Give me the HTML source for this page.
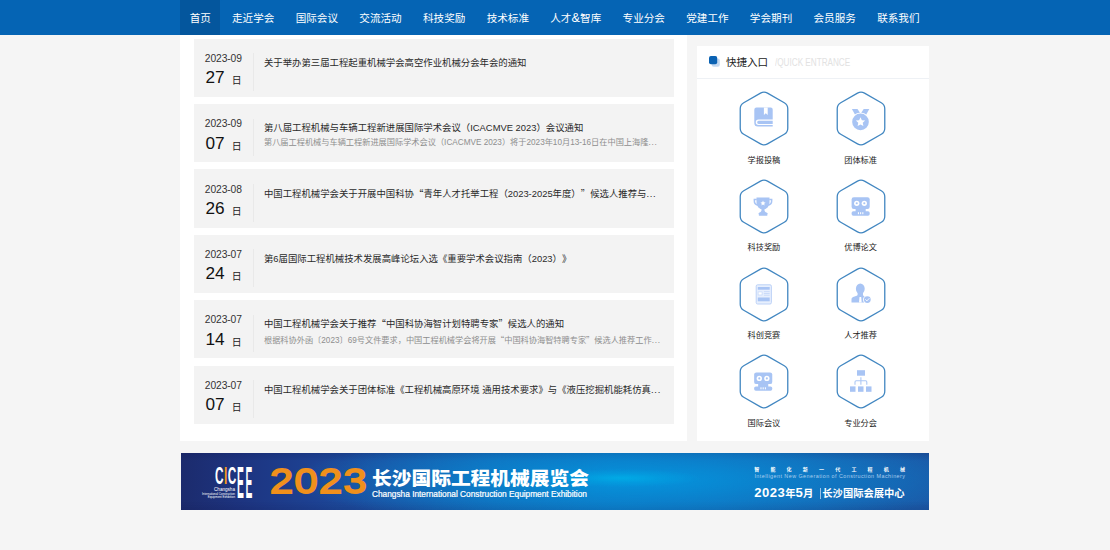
<!DOCTYPE html>
<html lang="zh-CN">
<head>
<meta charset="utf-8">
<title>中国工程机械学会</title>
<style>
*{margin:0;padding:0;box-sizing:border-box;}
html,body{width:1110px;height:550px;overflow:hidden;background:#f5f5f5;}
body{text-spacing-trim:space-all;font-kerning:none;position:relative;font-family:"Liberation Sans","Noto Sans CJK SC",sans-serif;color:#222;}
a{color:inherit;text-decoration:none;}
/* NAV */
#nav{position:absolute;left:0;top:0;width:1110px;height:34.6px;background:#0564b4;}
#nav ul{list-style:none;position:absolute;left:180.3px;top:0;height:34.6px;display:flex;}
#nav li{height:34.6px;line-height:36.9px;font-size:10.6px;color:#fff;padding:0 10.65px;white-space:nowrap;}
#nav li i{font-style:normal;font-size:12.6px;letter-spacing:.2px;}
#nav li.on{background:#04569d;padding:0 9.35px;margin-right:1.2px;box-shadow:1.2px 0 0 #0564b4;}
.el{letter-spacing:.75px;}
.fw{font-family:"Noto Sans CJK SC",sans-serif;}
/* LIST PANEL */
#main{position:absolute;left:180.3px;top:34.6px;width:506.8px;height:406.6px;background:#fff;}
.it{position:absolute;left:13.3px;width:480.2px;height:58.3px;background:#f3f3f3;}
.it .ym{position:absolute;left:11.2px;top:14.2px;font-size:10.3px;line-height:12px;color:#333;letter-spacing:-.1px;}
.it .d{position:absolute;left:11.8px;top:28.7px;font-size:17.2px;line-height:20px;color:#111;}
.it .r{position:absolute;left:38.1px;top:36.6px;font-size:9.9px;line-height:12px;color:#222;}
.it .ln{position:absolute;left:59.4px;top:14.6px;width:1px;height:37.6px;background:#e9e9e9;}
.it .t{position:absolute;left:70.4px;top:17.2px;font-size:9.4px;line-height:13px;color:#2a2a2a;white-space:nowrap;}
.it .s{position:absolute;left:70.4px;top:33.5px;font-size:8.2px;line-height:11px;color:#8e8e8e;white-space:nowrap;}
/* SIDEBAR */
#side{position:absolute;left:696.8px;top:45.8px;width:232.2px;height:395.4px;background:#fff;}
#side .hd{position:absolute;left:0;top:0;width:100%;height:33.1px;border-bottom:1px solid #eef1f5;}
#side .hd .ic{position:absolute;left:12.6px;top:10.6px;width:11px;height:11px;}
#side .hd h3{position:absolute;left:29.1px;top:9.3px;font-size:10.55px;line-height:14px;font-weight:400;color:#222;}
#side .hd em{position:absolute;left:78px;top:11.1px;font-size:10.2px;line-height:12px;font-style:normal;color:#e2e2e2;white-space:nowrap;transform-origin:0 0;transform:scaleX(.8);}
.q{position:absolute;width:80px;text-align:center;}
.q svg{display:block;position:absolute;left:14px;top:0;width:52px;height:57px;}
.q span{position:absolute;left:-.4px;width:80px;top:64.7px;font-size:8.2px;line-height:11px;color:#222;white-space:nowrap;}
/* BANNER */
#ban{position:absolute;left:180.6px;top:452.8px;width:748.4px;height:57px;overflow:hidden;
background:
radial-gradient(ellipse 80px 9px at 440px 25px, rgba(0,176,232,.8) 0%, rgba(0,168,228,.4) 50%, rgba(0,150,220,0) 100%),
radial-gradient(ellipse 350px 46px at 455px 27px, rgba(3,152,224,.9) 0%, rgba(5,142,216,.55) 45%, rgba(10,130,205,0) 100%),
linear-gradient(180deg,rgba(10,10,60,.16) 0%,rgba(10,10,60,0) 14%,rgba(10,10,60,0) 84%,rgba(10,10,60,.12) 100%),
linear-gradient(90deg,#1c2b6d 0%,#1d3480 8%,#1d4293 18%,#1b52a3 27%,#1468b6 42%,#1074c0 58%,#146ebb 72%,#1963b0 86%,#1b59a7 100%);}
#ban div{position:absolute;white-space:nowrap;color:#fff;}
</style>
</head>
<body>
<div id="nav">
<ul>
<li class="on">首页</li><li>走近学会</li><li>国际会议</li><li>交流活动</li><li>科技奖励</li><li>技术标准</li><li>人才<i>&amp;</i>智库</li><li>专业分会</li><li>党建工作</li><li>学会期刊</li><li>会员服务</li><li>联系我们</li>
</ul>
</div>

<div id="main">
<div class="it" style="top:4px"><div class="ym">2023-09</div><div class="d">27</div><div class="r">日</div><div class="ln"></div><div class="t">关于举办第三届工程起重机械学会高空作业机械分会年会的通知</div></div>
<div class="it" style="top:69.4px"><div class="ym">2023-09</div><div class="d">07</div><div class="r">日</div><div class="ln"></div><div class="t">第八届工程机械与车辆工程新进展国际学术会议（ICACMVE 2023）会议通知</div><div class="s">第八届工程机械与车辆工程新进展国际学术会议（ICACMVE 2023）将于2023年10月13-16日在中国上海隆<span class="el">...</span></div></div>
<div class="it" style="top:134.8px"><div class="ym">2023-08</div><div class="d">26</div><div class="r">日</div><div class="ln"></div><div class="t">中国工程机械学会关于开展中国科协<span class="fw">“</span>青年人才托举工程（2023-2025年度）<span class="fw">”</span>候选人推荐与<span class="el">...</span></div></div>
<div class="it" style="top:200.2px"><div class="ym">2023-07</div><div class="d">24</div><div class="r">日</div><div class="ln"></div><div class="t">第6届国际工程机械技术发展高峰论坛入选《重要学术会议指南（2023）》</div></div>
<div class="it" style="top:265.6px"><div class="ym">2023-07</div><div class="d">14</div><div class="r">日</div><div class="ln"></div><div class="t">中国工程机械学会关于推荐<span class="fw">“</span>中国科协海智计划特聘专家<span class="fw">”</span>候选人的通知</div><div class="s">根据科协外函〔2023〕69号文件要求，中国工程机械学会将开展<span class="fw">“</span>中国科协海智特聘专家<span class="fw">”</span>候选人推荐工作<span class="el">...</span></div></div>
<div class="it" style="top:331px"><div class="ym">2023-07</div><div class="d">07</div><div class="r">日</div><div class="ln"></div><div class="t">中国工程机械学会关于团体标准《工程机械高原环境 通用技术要求》与《液压挖掘机能耗仿真<span class="el">...</span></div></div>
</div>

<div id="side">
<div class="hd">
<svg class="ic" viewBox="0 0 11 11"><rect x="2.7" y="2.6" width="8.1" height="8.1" rx="1.9" fill="#c3d8f0"/><rect x="0" y="0" width="8.2" height="8.2" rx="1.9" fill="#0a62b3"/></svg>
<h3>快捷入口</h3><em>/QUICK ENTRANCE</em>
</div>
<div class="q" style="left:27.5px;top:44.1px"><svg viewBox="0 0 52 57"><path d="M22.50 3.07A7.00 7.00 0 0 1 29.50 3.07L46.27 12.75A7.00 7.00 0 0 1 49.77 18.82L49.77 38.18A7.00 7.00 0 0 1 46.27 44.25L29.50 53.93A7.00 7.00 0 0 1 22.50 53.93L5.73 44.25A7.00 7.00 0 0 1 2.23 38.18L2.23 18.82A7.00 7.00 0 0 1 5.73 12.75Z" fill="#fff" stroke="#4287c1" stroke-width="1.3"/>
<g fill="#a8c4f4">
<path d="M16.3 19.7a2.2 2.2 0 0 1 2.2-2.2H32.7a2 2 0 0 1 2 2V36.6H19.9a3.6 3.6 0 0 1-3.6-3.6Z"/>
<path d="M20.5 29.6H35v5.5H20.5a2.75 2.75 0 0 1 0-5.5Z" fill="#fff"/>
<path d="M20.7 30.8H34.7v3.1H20.7a1.55 1.55 0 0 1 0-3.1Z"/>
<path d="M25.9 17.4h3.8v7.7l-1.9-1.9-1.9 1.9Z" fill="#fff"/>
</g></svg><span>学报投稿</span></div>

<div class="q" style="left:124.2px;top:44.1px"><svg viewBox="0 0 52 57"><path d="M22.50 3.07A7.00 7.00 0 0 1 29.50 3.07L46.27 12.75A7.00 7.00 0 0 1 49.77 18.82L49.77 38.18A7.00 7.00 0 0 1 46.27 44.25L29.50 53.93A7.00 7.00 0 0 1 22.50 53.93L5.73 44.25A7.00 7.00 0 0 1 2.23 38.18L2.23 18.82A7.00 7.00 0 0 1 5.73 12.75Z" fill="#fff" stroke="#4287c1" stroke-width="1.3"/>
<g fill="#a8c4f4">
<path d="M16.9 19h5.6l3 4.6-4.9 2.2Z"/><path d="M34.3 19h-5.6l-3 4.6 4.9 2.2Z"/>
<circle cx="25.5" cy="31.9" r="9.5" fill="#fff"/>
<circle cx="25.5" cy="31.9" r="8.3"/>
<polygon fill="#fff" points="25.50,27.20 26.88,30.20 30.16,30.59 27.73,32.83 28.38,36.06 25.50,34.45 22.62,36.06 23.27,32.83 20.84,30.59 24.12,30.20"/>
</g></svg><span>团体标准</span></div>

<div class="q" style="left:27.5px;top:131.9px"><svg viewBox="0 0 52 57"><path d="M22.50 3.07A7.00 7.00 0 0 1 29.50 3.07L46.27 12.75A7.00 7.00 0 0 1 49.77 18.82L49.77 38.18A7.00 7.00 0 0 1 46.27 44.25L29.50 53.93A7.00 7.00 0 0 1 22.50 53.93L5.73 44.25A7.00 7.00 0 0 1 2.23 38.18L2.23 18.82A7.00 7.00 0 0 1 5.73 12.75Z" fill="#fff" stroke="#4287c1" stroke-width="1.3"/>
<g fill="#a8c4f4">
<path d="M18.5 19.4h13v5.6a6.5 6.5 0 0 1-13 0Z"/>
<path d="M18.8 20.8h-3.2v2.3a4.8 4.8 0 0 0 4.2 4.8l-.4-1.5a3.3 3.3 0 0 1-2.3-3.2v-.9h1.7Z"/>
<path d="M31.2 20.8h3.2v2.3a4.8 4.8 0 0 1-4.2 4.8l.4-1.5a3.3 3.3 0 0 0 2.3-3.2v-.9h-1.7Z"/>
<path d="M23.5 30.5h3v1.8c0 1.2 1 2.1 2.6 2.7H20.9c1.600-.6 2.600-1.500 2.600-2.700Z"/>
<rect x="20.800" y="34.800" width="8.600" height="2.900" rx=".4"/>
<polygon transform="translate(.2,.3)" fill="#fff" points="24.80,22.30 25.53,23.99 27.37,24.17 25.99,25.39 26.39,27.18 24.80,26.25 23.21,27.18 23.61,25.39 22.23,24.17 24.07,23.99"/>
</g></svg><span>科技奖励</span></div>

<div class="q" style="left:124.2px;top:131.9px"><svg viewBox="0 0 52 57"><path d="M22.50 3.07A7.00 7.00 0 0 1 29.50 3.07L46.27 12.75A7.00 7.00 0 0 1 49.77 18.82L49.77 38.18A7.00 7.00 0 0 1 46.27 44.25L29.50 53.93A7.00 7.00 0 0 1 22.50 53.93L5.73 44.25A7.00 7.00 0 0 1 2.23 38.18L2.23 18.82A7.00 7.00 0 0 1 5.73 12.75Z" fill="#fff" stroke="#4287c1" stroke-width="1.3"/><g fill="#a8c4f4">
<rect x="16.6" y="19.3" width="18.1" height="11.7" rx="2.2"/>
<rect x="20.6" y="30.500" width="10.100" height="3.500"/>
<rect x="16.6" y="33.3" width="18.1" height="4.400" rx="1.700"/>
<circle cx="21.75" cy="25.3" r="2.650" fill="#fff"/><circle cx="29.3" cy="25.3" r="2.650" fill="#fff"/>
<circle cx="21.75" cy="25.3" r="1.050"/><circle cx="29.3" cy="25.3" r="1.050"/>
<rect x="22.9" y="34.200" width="1.050" height="2" fill="#fff"/><rect x="25.100" y="34.200" width="1.050" height="2" fill="#fff"/><rect x="27.3" y="34.200" width="1.050" height="2" fill="#fff"/>
</g></svg><span>优博论文</span></div>

<div class="q" style="left:27.5px;top:220px"><svg viewBox="0 0 52 57"><path d="M22.50 3.07A7.00 7.00 0 0 1 29.50 3.07L46.27 12.75A7.00 7.00 0 0 1 49.77 18.82L49.77 38.18A7.00 7.00 0 0 1 46.27 44.25L29.50 53.93A7.00 7.00 0 0 1 22.50 53.93L5.73 44.25A7.00 7.00 0 0 1 2.23 38.18L2.23 18.82A7.00 7.00 0 0 1 5.73 12.75Z" fill="#fff" stroke="#4287c1" stroke-width="1.3"/>
<rect x="18.2" y="18.8" width="15.2" height="19.2" rx="1.4" fill="#e7effd" stroke="#bdd2f7" stroke-width="1"/>
<rect x="19.8" y="21" width="11.9" height="2.7" fill="#a8c4f4"/>
<rect x="19.8" y="31.5" width="11.9" height="3.8" fill="#a8c4f4"/>
<rect x="20.1" y="25.9" width="4" height="3.1" fill="#fff" stroke="#c3d6f8" stroke-width=".7"/>
<rect x="25.9" y="25.3" width="5.8" height=".8" fill="#c3d6f8"/><rect x="25.9" y="27.1" width="5.8" height=".8" fill="#c3d6f8"/><rect x="25.9" y="28.8" width="5.8" height=".8" fill="#c3d6f8"/>
</svg><span>科创竞赛</span></div>

<div class="q" style="left:124.2px;top:220px"><svg viewBox="0 0 52 57"><path d="M22.50 3.07A7.00 7.00 0 0 1 29.50 3.07L46.27 12.75A7.00 7.00 0 0 1 49.77 18.82L49.77 38.18A7.00 7.00 0 0 1 46.27 44.25L29.50 53.93A7.00 7.00 0 0 1 22.50 53.93L5.73 44.25A7.00 7.00 0 0 1 2.23 38.18L2.23 18.82A7.00 7.00 0 0 1 5.73 12.75Z" fill="#fff" stroke="#4287c1" stroke-width="1.3"/>
<g fill="#a8c4f4">
<ellipse cx="25.3" cy="22.8" rx="4.4" ry="5.3"/>
<path d="M22.6 26.5h5.4v2.2c0 .8.5 1.2 1.6 1.6l2.2.8c1 .4 1.6 1.2 1.6 2.4v2.9H16.5v-2.9c0-1.2.6-2 1.6-2.4l2.9-1c1.1-.4 1.6-.8 1.6-1.6Z"/>
<path d="M24.5 31h1.7l.5 5.4h-2.7Z" fill="#fff"/>
<circle cx="32.3" cy="33.6" r="4.3" fill="#fff"/>
<circle cx="32.3" cy="33.6" r="3.4"/>
<path d="M30.6 33.6l1.3 1.3 2.2-2.4" fill="none" stroke="#fff" stroke-width=".9" stroke-linecap="round" stroke-linejoin="round"/>
</g></svg><span>人才推荐</span></div>

<div class="q" style="left:27.5px;top:307.4px"><svg viewBox="0 0 52 57"><path d="M22.50 3.07A7.00 7.00 0 0 1 29.50 3.07L46.27 12.75A7.00 7.00 0 0 1 49.77 18.82L49.77 38.18A7.00 7.00 0 0 1 46.27 44.25L29.50 53.93A7.00 7.00 0 0 1 22.50 53.93L5.73 44.25A7.00 7.00 0 0 1 2.23 38.18L2.23 18.82A7.00 7.00 0 0 1 5.73 12.75Z" fill="#fff" stroke="#4287c1" stroke-width="1.3"/><g fill="#a8c4f4" transform="translate(-.45,.1)">
<rect x="16.6" y="19.3" width="18.1" height="11.7" rx="2.2"/>
<rect x="20.6" y="30.500" width="10.100" height="3.500"/>
<rect x="16.6" y="33.3" width="18.1" height="4.400" rx="1.700"/>
<circle cx="21.75" cy="25.3" r="2.650" fill="#fff"/><circle cx="29.3" cy="25.3" r="2.650" fill="#fff"/>
<circle cx="21.75" cy="25.3" r="1.050"/><circle cx="29.3" cy="25.3" r="1.050"/>
<rect x="22.9" y="34.200" width="1.050" height="2" fill="#fff"/><rect x="25.100" y="34.200" width="1.050" height="2" fill="#fff"/><rect x="27.3" y="34.200" width="1.050" height="2" fill="#fff"/>
</g></svg><span>国际会议</span></div>

<div class="q" style="left:124.2px;top:307.4px"><svg viewBox="0 0 52 57"><path d="M22.50 3.07A7.00 7.00 0 0 1 29.50 3.07L46.27 12.75A7.00 7.00 0 0 1 49.77 18.82L49.77 38.18A7.00 7.00 0 0 1 46.27 44.25L29.50 53.93A7.00 7.00 0 0 1 22.50 53.93L5.73 44.25A7.00 7.00 0 0 1 2.23 38.18L2.23 18.82A7.00 7.00 0 0 1 5.73 12.75Z" fill="#fff" stroke="#4287c1" stroke-width="1.3"/>
<g fill="#a8c4f4">
<rect x="22" y="17.2" width="8" height="5.500"/>
<rect x="15" y="33.4" width="5.5" height="5.4"/><rect x="23" y="33.4" width="5.5" height="5.4"/><rect x="31" y="33.4" width="5.5" height="5.4"/>
<path d="M25.9 24.2v7.600M20 31.8v-2.800a1.2 1.2 0 0 1 1.2-1.2h9.400a1.2 1.2 0 0 1 1.2 1.2v2.800" fill="none" stroke="#adc8f5" stroke-width="1.100"/>
</g></svg><span>专业分会</span></div>
</div>

<div id="ban">
<div id="b_cic" style="left:34.2px;top:9.2px;font-size:23.6px;line-height:28px;font-weight:700;transform-origin:0 0;transform:scaleX(.5);letter-spacing:1px">C<span style="color:#f39a1e">I</span>C</div>
<div id="b_ee" style="left:56.5px;top:4.8px;font-size:44.4px;line-height:50px;font-weight:700;transform-origin:0 0;transform:scaleX(.23);letter-spacing:7.2px">EE</div>
<div id="b_l1" style="right:694px;top:34.4px;font-size:4.6px;line-height:6px;">Changsha</div>
<div id="b_l2" style="right:694px;top:39.4px;font-size:2.9px;line-height:4px;">International Construction</div>
<div id="b_l3" style="right:694px;top:42.3px;font-size:2.9px;line-height:4px;">Equipment Exhibition</div>
<div id="b_yr" style="left:89.2px;top:7.4px;font-size:35.4px;line-height:42px;font-weight:400;-webkit-text-stroke:1.8px #f0901c;color:#f0901c;transform-origin:0 0;transform:scaleX(1.175);letter-spacing:1.2px;">2023</div>
<div id="b_cn" style="left:191px;top:12.6px;font-size:18.5px;line-height:28px;font-weight:900;transform-origin:0 0;transform:scaleX(1.066);">长沙国际工程机械展览会</div>
<div id="b_en" style="left:191.2px;top:35.9px;font-size:8.7px;line-height:10px;-webkit-text-stroke:.22px #fff;transform-origin:0 0;transform:scaleX(.955);">Changsha International Construction Equipment Exhibition</div>
<div id="b_r1" style="left:573.6px;top:11.9px;font-size:5px;line-height:8px;font-weight:700;letter-spacing:11.2px;">智能化新一代工程机械</div>
<div id="b_r2" style="left:573.8px;top:19.4px;font-size:5.4px;line-height:8px;letter-spacing:.45px;color:#a9cdee;">Intelligent New Generation of Construction Machinery</div>
<div id="b_r3" style="left:573.6px;top:32.4px;font-size:10.3px;line-height:16px;font-weight:700;"><span style="font-size:13.1px;letter-spacing:.45px">2023</span>年<span style="font-size:13.1px;letter-spacing:.3px">5</span>月<span style="display:inline-block;width:1px;height:11px;background:#9cc3e6;margin:0 1.7px 0 6.3px;vertical-align:-2px"></span>长沙国际会展中心</div>
</div>
</body>
</html>
